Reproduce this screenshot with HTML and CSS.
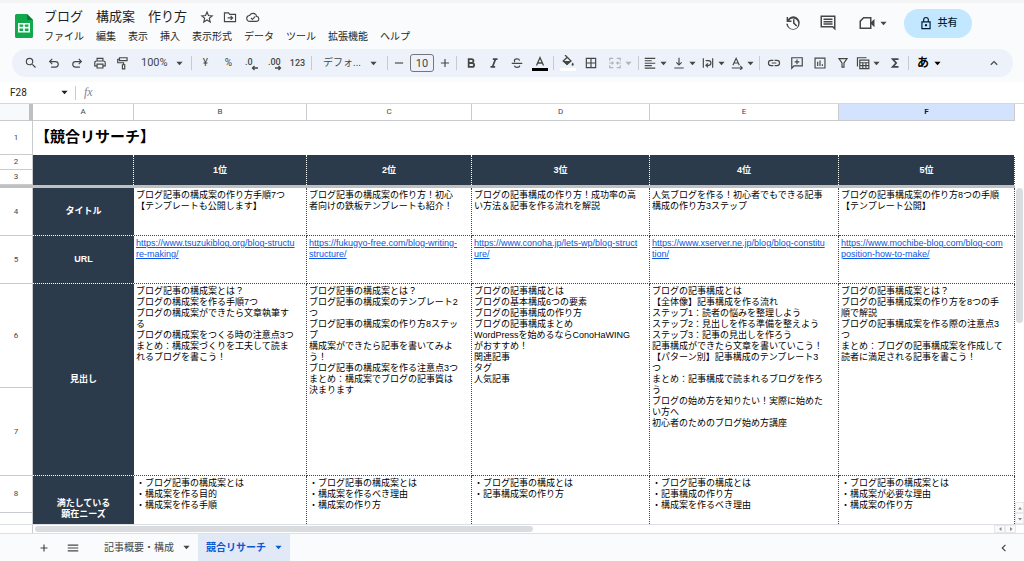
FILE: index.html
```html
<!DOCTYPE html>
<html lang="ja">
<head>
<meta charset="utf-8">
<title>ブログ 構成案 作り方</title>
<link rel="stylesheet" href="styles.css">
</head>
<body>
<svg class="defs" aria-hidden="true">
  <symbol id="caret" viewBox="0 0 8 8"><path d="M.5 2h7L4 6z"/></symbol>
</svg>
<div class="app">
  <header class="top">
    <svg class="logo" viewBox="0 0 18 24" role="img" aria-label="スプレッドシート">
      <path fill="#11a94b" d="M1.500 0H12l6 6v16.500a1.500 1.500 0 0 1-1.500 1.500h-15A1.500 1.500 0 0 1 0 22.500v-21A1.500 1.500 0 0 1 1.500 0z"/>
      <path fill="#0a7a35" d="M12 0l6 6h-6z"/>
      <path fill="#fff" fill-rule="evenodd" d="M3 9h12v9.500H3zM4.500 10.500v2.300h3.700v-2.300zm5.300 0v2.300h3.700v-2.300zM4.500 14.400V17h3.700v-2.600zm5.300 0V17h3.700v-2.600z"/>
    </svg>
    <div class="heading">
      <div class="title-row">
        <h1>ブログ　構成案　作り方</h1>
        <button class="mini" aria-label="スター"><svg class="i14 line" viewBox="0 0 24 24"><path d="M12 3.500l2.500 5.900 6.400.6-4.900 4.200 1.500 6.300-5.500-3.400-5.500 3.400L8 14.200 3.100 10l6.400-.6z"/></svg></button>
        <button class="mini" aria-label="移動"><svg class="i14 line" viewBox="0 0 24 24"><path d="M2.500 5h7l2 2.500h10V20h-19zM8 13.500h8M13 10l3.500 3.500L13 17"/></svg></button>
        <button class="mini" aria-label="保存状態"><svg class="i14 line" viewBox="0 0 24 24"><path d="M6.500 19.500a5 5 0 0 1-.5-10 6.500 6.500 0 0 1 12.300 1.500 4.300 4.300 0 0 1 .2 8.500zM8.500 13.500l2.500 2.500 5-5"/></svg></button>
      </div>
      <nav class="menus">
        <button>ファイル</button><button>編集</button><button>表示</button><button>挿入</button><button>表示形式</button><button>データ</button><button>ツール</button><button>拡張機能</button><button>ヘルプ</button>
      </nav>
    </div>
    <div class="actions">
      <button aria-label="変更履歴"><svg class="i18" viewBox="0 0 24 24"><path d="M13 3a9 9 0 0 0-7.500 4V4h-2v6.500H10v-2H6.800A7 7 0 1 1 5.100 13H3a9 9 0 1 0 10-10zm-1 4v5.600l4.300 4.100 1.400-1.400L14 11.700V7z" /></svg></button>
      <button aria-label="コメント"><svg class="i18" viewBox="0 0 24 24"><path fill-rule="evenodd" d="M2 2h20v20l-4-4H2zm2 2v12h14.800l1.200 1.200V4zm2 2h12v2H6zm0 3.200h12v2H6zm0 3.200h12v2H6z"/></svg></button>
      <button class="meet" aria-label="ビデオ通話"><svg class="i18" viewBox="0 0 24 24"><path class="line" d="M7.500 5H17v14H3V9.500z"/><path d="M17 11l5-4.500v11L17 13z"/></svg><svg class="caret"><use href="#caret"/></svg></button>
      <button class="share"><svg class="i14 line" viewBox="0 0 24 24"><path d="M5 10h14v11.500H5zM8 10V6.500a4 4 0 0 1 8 0V10"/><circle cx="12" cy="15.700" r="1"/></svg>共有</button>
    </div>
  </header>

  <div class="toolbar" role="toolbar">
    <button aria-label="検索"><svg class="i14" viewBox="0 0 24 24"><path d="M15.500 14h-.79l-.28-.27A6.470 6.470 0 0 0 16 9.500 6.500 6.500 0 1 0 9.500 16c1.610 0 3.090-.59 4.230-1.570l.27.28v.79l5 4.990L20.490 19zm-6 0a4.500 4.500 0 1 1 0-9 4.500 4.500 0 0 1 0 9z"/></svg></button>
    <button aria-label="元に戻す"><svg class="i14 line" viewBox="0 0 24 24"><path d="M9 5L4.500 9.500 9 14M5 9.500h9.500a4.700 4.700 0 0 1 0 9.500H7"/></svg></button>
    <button aria-label="やり直し"><svg class="i14 line" viewBox="0 0 24 24"><path d="M15 5l4.500 4.500L15 14M19 9.500H9.500a4.700 4.700 0 0 0 0 9.500H17"/></svg></button>
    <button aria-label="印刷"><svg class="i14 line" viewBox="0 0 24 24"><path d="M7 8V4h10v4M7 17H3v-5.500A3 3 0 0 1 6 8.500h12a3 3 0 0 1 3 3V17h-4M7 14h10v6.500H7z"/></svg></button>
    <button aria-label="書式を貼り付け"><svg class="i14 line" viewBox="0 0 24 24"><path d="M6 3h13v5H6zM6 5.500H3v6h10V15M11 15h4v7h-4z"/></svg></button>
    <label class="pick zoom"><select aria-label="ズーム"><option>100%</option></select><svg class="caret"><use href="#caret"/></svg></label>
    <i class="sep"></i>
    <button aria-label="通貨">¥</button>
    <button aria-label="パーセント">%</button>
    <button aria-label="小数点以下を減らす"><svg class="i16" viewBox="0 0 16 16"><text x="1" y="10">.0</text><path class="thin" d="M14 13H8.500M10.500 11l-2 2 2 2"/></svg></button>
    <button aria-label="小数点以下を増やす"><svg class="i16" viewBox="0 0 16 16"><text x="1" y="10">.00</text><path class="thin" d="M8 13h5.500M11.500 11l2 2-2 2"/></svg></button>
    <button class="num" aria-label="表示形式の詳細">123</button>
    <i class="sep"></i>
    <label class="pick font"><select aria-label="フォント"><option>デフォ...</option></select><svg class="caret"><use href="#caret"/></svg></label>
    <i class="sep"></i>
    <button class="step" aria-label="縮小"><svg class="i14 line" viewBox="0 0 24 24"><path d="M5 12h14"/></svg></button>
    <input class="size" aria-label="フォントサイズ" value="10">
    <button class="step" aria-label="拡大"><svg class="i14 line" viewBox="0 0 24 24"><path d="M5 12h14M12 5v14"/></svg></button>
    <i class="sep"></i>
    <button aria-label="太字"><svg class="i14 heavy" viewBox="0 0 24 24"><path d="M8 5.500h5a3.200 3.200 0 0 1 0 6.400H8zM8 12h6a3.400 3.400 0 0 1 0 6.800H8z"/></svg></button>
    <button aria-label="斜体"><svg class="i14 heavy" viewBox="0 0 24 24"><path d="M10 5.500h8M6 18.500h8M14.500 5.500l-5 13"/></svg></button>
    <button aria-label="取り消し線"><svg class="i14 line" viewBox="0 0 24 24"><path d="M3 12.500h18M16.500 8c-.5-2-2-3-4.500-3-2.700 0-4.500 1.200-4.500 3.200 0 1 .4 1.700 1 2.300M7.500 16.500c.5 2 2 3 4.500 3 2.800 0 4.600-1.300 4.600-3.300"/></svg></button>
    <button aria-label="テキストの色"><svg class="i16" viewBox="0 0 16 16"><path class="thin" d="M4.500 10.500L8 2.500l3.500 8M5.700 8h4.600"/><path fill="#000" d="M0 13h16v3H0z"/></svg></button>
    <i class="sep"></i>
    <button aria-label="塗りつぶしの色"><svg class="i16" viewBox="0 0 16 16"><path class="thin" d="M5 0l6 6-4 3.500L3.200 6 7 2.500"/><path d="M3.200 6h7.800L7 10zM12.700 7.500c1.700 2 1.200 3.200 0 3.200s-1.700-1.200 0-3.200z"/><path fill="#fff" d="M0 13h16v3H0z"/></svg></button>
    <button aria-label="枠線"><svg class="i14 line" viewBox="0 0 24 24"><path d="M4 4h16v16H4zM12 4v16M4 12h16"/></svg></button>
    <button class="drop merge" disabled aria-label="セルを結合"><svg class="i14 line" viewBox="0 0 24 24"><path d="M3 8V4h6M15 4h6v4M3 16v4h6M15 20h6v-4M2 12h7M6.500 9.500L9 12l-2.500 2.500M22 12h-7M17.500 9.500L15 12l2.500 2.500"/></svg><svg class="caret"><use href="#caret"/></svg></button>
    <i class="sep"></i>
    <button class="drop" aria-label="水平方向の配置"><svg class="i14 line" viewBox="0 0 24 24"><path d="M3 4h18M3 8.200h12M3 12.400h18M3 16.600h12M3 20.800h18"/></svg><svg class="caret"><use href="#caret"/></svg></button>
    <button class="drop" aria-label="垂直方向の配置"><svg class="i14 line" viewBox="0 0 24 24"><path d="M12 3v12M7.500 11l4.500 4.500 4.500-4.500M4 20.500h16"/></svg><svg class="caret"><use href="#caret"/></svg></button>
    <button class="drop" aria-label="折り返し"><svg class="i14 line" viewBox="0 0 24 24"><path d="M4 4v16M20 4v16M8 8h5a3.500 3.500 0 0 1 0 8H9M12 12.500L8.500 16l3.500 3.500"/></svg><svg class="caret"><use href="#caret"/></svg></button>
    <button class="drop" aria-label="回転"><svg class="i14 line" viewBox="0 0 24 24"><path d="M5 16l5.500-12L16 16M7 12h7M3 20.500h17M17.500 17l3.500 3.500-3.500 3"/></svg><svg class="caret"><use href="#caret"/></svg></button>
    <i class="sep"></i>
    <button aria-label="リンク"><svg class="i14 line" viewBox="0 0 24 24"><path d="M11 7.500H7a4.500 4.500 0 0 0 0 9h4M13 7.500h4a4.500 4.500 0 0 1 0 9h-4M8 12h8"/></svg></button>
    <button aria-label="コメントを挿入"><svg class="i14 line" viewBox="0 0 24 24"><path d="M3 3h18v14H7l-4 4zM12 6v8M8 10h8"/></svg></button>
    <button aria-label="グラフを挿入"><svg class="i14 line" viewBox="0 0 24 24"><path d="M3.500 3.500h17v17h-17zM8 17v-7M12 17V7.500M16 17v-3"/></svg></button>
    <button aria-label="フィルタ"><svg class="i14 line" viewBox="0 0 24 24"><path d="M5 4.500h14l-5.300 7.500v7h-3.400v-7z"/></svg></button>
    <button class="drop" aria-label="フィルタ表示"><svg class="i14 line" viewBox="0 0 24 24"><path d="M18 3H2.500v15M6.500 7H22v14.500H6.500zM6.500 11.500H22M6.500 16.500H22M11.700 11.500v10M17 11.500v10"/></svg><svg class="caret"><use href="#caret"/></svg></button>
    <button aria-label="関数"><svg class="i14 heavy" viewBox="0 0 24 24"><path d="M18 5.200H8l6 6.800-6 6.800h10"/></svg></button>
    <i class="sep"></i>
    <button class="drop ime" aria-label="入力ツール">あ<svg class="caret"><use href="#caret"/></svg></button>
    <button class="fold" aria-label="メニューを非表示"><svg class="i14 line" viewBox="0 0 24 24"><path d="M6.500 15L12 9.500l5.500 5.500"/></svg></button>
  </div>

  <div class="formula">
    <label class="name"><input aria-label="名前ボックス" value="F28"><svg class="caret"><use href="#caret"/></svg></label>
    <i class="sep"></i>
    <label class="fx" for="fx">fx</label>
    <input id="fx" class="fx-input" aria-label="数式バー">
  </div>

  <main class="sheet">
    <div class="view">
    <table>
      <colgroup><col class="c-num"><col class="c-a"><col class="c-b"><col class="c-c"><col class="c-d"><col class="c-e"><col></colgroup>
      <thead><tr class="letters"><th class="corner"></th><th>A</th><th>B</th><th>C</th><th>D</th><th>E</th><th class="on">F</th></tr></thead>
      <tbody>
        <tr class="r1"><th>1</th><td colspan="6" class="caption">【競合リサーチ】</td></tr>
        <tr class="r2"><th>2</th><td rowspan="2" class="dark"></td><td rowspan="2" class="dark">1位</td><td rowspan="2" class="dark">2位</td><td rowspan="2" class="dark">3位</td><td rowspan="2" class="dark">4位</td><td rowspan="2" class="dark">5位</td></tr>
        <tr class="r2"><th>3</th></tr>
        <tr class="freeze"><td colspan="7"></td></tr>
        <tr class="r4"><th>4</th><td class="dark side">タイトル</td>
          <td>ブログ記事の構成案の作り方手順7つ<br>【テンプレートも公開します】</td>
          <td>ブログ記事の構成案の作り方！初心<br>者向けの鉄板テンプレートも紹介！</td>
          <td>ブログの記事構成の作り方！成功率の高<br>い方法＆記事を作る流れを解説</td>
          <td>人気ブログを作る！初心者でもできる記事<br>構成の作り方3ステップ</td>
          <td>ブログの記事構成案の作り方8つの手順<br>【テンプレート公開】</td></tr>
        <tr class="r4"><th>5</th><td class="dark side">URL</td>
          <td><a href="https://www.tsuzukiblog.org/blog-structure-making/">https://www.tsuzukiblog.org/blog-structu<br>re-making/</a></td>
          <td><a href="https://fukugyo-free.com/blog-writing-structure/">https://fukugyo-free.com/blog-writing-<br>structure/</a></td>
          <td><a href="https://www.conoha.jp/lets-wp/blog-structure/">https://www.conoha.jp/lets-wp/blog-struct<br>ure/</a></td>
          <td><a href="https://www.xserver.ne.jp/blog/blog-constitution/">https://www.xserver.ne.jp/blog/blog-constitu<br>tion/</a></td>
          <td><a href="https://www.mochibe-blog.com/blog-composition-how-to-make/">https://www.mochibe-blog.com/blog-com<br>position-how-to-make/</a></td></tr>
        <tr class="r6"><th>6</th><td rowspan="2" class="dark side">見出し</td>
          <td rowspan="2">ブログ記事の構成案とは？<br>ブログの構成案を作る手順7つ<br>ブログの構成案ができたら文章執筆す<br>る<br>ブログの構成案をつくる時の注意点3つ<br>まとめ：構成案づくりを工夫して読ま<br>れるブログを書こう！</td>
          <td rowspan="2">ブログ記事の構成案とは？<br>ブログ記事の構成案のテンプレート2<br>つ<br>ブログ記事の構成案の作り方8ステッ<br>プ<br>構成案ができたら記事を書いてみよ<br>う！<br>ブログ記事の構成案を作る注意点3つ<br>まとめ：構成案でブログの記事質は<br>決まります</td>
          <td rowspan="2">ブログの記事構成とは<br>ブログの基本構成6つの要素<br>ブログの記事構成の作り方<br>ブログの記事構成まとめ<br>WordPressを始めるならConoHaWING<br>がおすすめ！<br>関連記事<br>タグ<br>人気記事</td>
          <td rowspan="2">ブログの記事構成とは<br>【全体像】記事構成を作る流れ<br>ステップ1：読者の悩みを整理しよう<br>ステップ2：見出しを作る準備を整えよう<br>ステップ3：記事の見出しを作ろう<br>記事構成ができたら文章を書いていこう！<br>【パターン別】記事構成のテンプレート3<br>つ<br>まとめ：記事構成で読まれるブログを作ろ<br>う<br>ブログの始め方を知りたい！実際に始めた<br>い方へ<br>初心者のためのブログ始め方講座</td>
          <td rowspan="2">ブログの記事構成案とは？<br>ブログの記事構成案の作り方を8つの手<br>順で解説<br>ブログの記事構成案を作る際の注意点3<br>つ<br>まとめ：ブログの記事構成案を作成して<br>読者に満足される記事を書こう！</td></tr>
        <tr class="r7"><th>7</th></tr>
        <tr class="r8"><th>8</th><td rowspan="2" class="dark side">満たしている<br>顕在ニーズ</td>
          <td rowspan="2">・ブログ記事の構成案とは<br>・構成案を作る目的<br>・構成案を作る手順</td>
          <td rowspan="2">・ブログ記事の構成案とは<br>・構成案を作るべき理由<br>・構成案の作り方</td>
          <td rowspan="2">・ブログ記事の構成とは<br>・記事構成案の作り方</td>
          <td rowspan="2">・ブログ記事の構成とは<br>・記事構成の作り方<br>・構成案を作るべき理由</td>
          <td rowspan="2">・ブログ記事の構成案とは<br>・構成案が必要な理由<br>・構成案の作り方</td></tr>
        <tr class="r9"><th></th></tr>
      </tbody>
    </table>
    </div>
    <div class="vbar">
      <div class="vtrack"><div class="vthumb"></div></div>
      <button aria-label="上へ"><svg viewBox="0 0 8 8"><path d="M2 5.500h4L4 3z"/></svg></button>
      <button aria-label="下へ"><svg viewBox="0 0 8 8"><path d="M2 3h4L4 5.500z"/></svg></button>
    </div>
  </main>

  <div class="hbar">
    <div class="htrack"><div class="hthumb"></div></div>
    <button aria-label="左へ"><svg viewBox="0 0 8 8"><path d="M5.500 2v4L3 4z"/></svg></button>
    <button aria-label="右へ"><svg viewBox="0 0 8 8"><path d="M3 2v4l2.500-2z"/></svg></button>
  </div>

  <footer class="tabs">
    <button class="tool" aria-label="シートを追加"><svg class="i14 line" viewBox="0 0 24 24"><path d="M6 12h12M12 6v12"/></svg></button>
    <button class="tool" aria-label="すべてのシート"><svg class="i14 line" viewBox="0 0 24 24"><path d="M3 7h18M3 12h18M3 17h18"/></svg></button>
    <button class="tab">記事概要・構成<svg class="caret"><use href="#caret"/></svg></button>
    <button class="tab current">競合リサーチ<svg class="caret"><use href="#caret"/></svg></button>
    <button class="tool panel" aria-label="サイドパネルを表示"><svg class="i14 line" viewBox="0 0 24 24"><path d="M14.500 6.500L9 12l5.500 5.500"/></svg></button>
  </footer>
</div>
</body>
</html>
```
FILE: styles.css
```css
* { box-sizing: border-box; }

body {
  margin: 0;
  color: #1f1f1f;
  background: #f9fbfd;
  font-family: Roboto, "Noto Sans CJK JP", sans-serif;
  font-size: 10px;
  line-height: 12px;
}

button, input, select {
  margin: 0;
  padding: 0;
  border: 0;
  background: none;
  color: inherit;
  font: inherit;
}

button {
  display: flex;
  align-items: center;
  justify-content: center;
  white-space: nowrap;
}

svg { display: block; flex: none; fill: currentColor; }
.defs { position: absolute; width: 0; height: 0; }
.i14 { width: 14px; height: 14px; }
.i16 { width: 16px; height: 16px; }
.i18 { width: 18px; height: 18px; }
.caret { width: 7px; height: 7px; }
.line { fill: none; stroke: currentColor; stroke-width: 2; }
.heavy { fill: none; stroke: currentColor; stroke-width: 3; }
.thin { fill: none; stroke: currentColor; stroke-width: 1.3; }

.app {
  display: flex;
  flex-direction: column;
  height: 100vh;
  border-top: 3px solid #f4f4f4;
}

/* Header */
.top {
  display: flex;
  padding: 4px 12px 0 15px;
  height: 46px;
}
.logo { width: 18px; height: 24px; margin-top: 7px; }
.heading { padding-left: 11px; }
.title-row { display: flex; align-items: center; height: 20px; color: #444746; }
h1 {
  margin: 0 8px 0 0;
  color: #1f1f1f;
  font-size: 13px;
  font-weight: 400;
  line-height: 20px;
}
.mini { width: 23px; height: 18px; }
.menus { display: flex; gap: 12px; }
.menus button { height: 20px; }

.actions {
  display: flex;
  align-items: center;
  gap: 17px;
  height: 32px;
  margin-left: auto;
  padding-right: 40px;
  color: #444746;
}
.meet { gap: 4px; padding-left: 4px; }
.share {
  gap: 5px;
  width: 68px;
  height: 29px;
  border-radius: 15px;
  background: #c2e7ff;
  color: #001d35;
  font-weight: 500;
}

/* Toolbar */
.toolbar {
  display: flex;
  align-items: center;
  height: 28px;
  margin: 0 11px 5px 12px;
  padding: 0 8px 0 7px;
  border-radius: 14px;
  background: #edf2fa;
  color: #444746;
}
.toolbar button { flex: none; width: 23px; height: 22px; }
.toolbar text { font-size: 9px; font-weight: 500; }
.toolbar .num { font-size: 9px; font-weight: 500; }
.sep { flex: none; width: 1px; height: 14px; margin: 0 2px; background: #c7cad0; }
.pick { display: grid; align-items: center; }
.pick > * { grid-area: 1 / 1; }
.pick .caret { justify-self: end; pointer-events: none; }
.pick select { appearance: none; width: 100%; }
.zoom { width: 55px; padding: 0 6px 0 7px; font-size: 11px; }
.font { width: 71px; padding: 0 8px 0 9px; }
.toolbar .step { width: 18px; }
.size {
  width: 24px;
  height: 18px;
  margin: 0 2px;
  border: 1px solid #747775;
  border-radius: 3px;
  font-size: 11px;
  text-align: center;
}
.toolbar .drop { justify-content: flex-start; gap: 3px; width: 29px; padding-left: 2px; }
.toolbar .merge { width: 34px; padding-left: 6px; color: #b0b3b8; }
.toolbar .ime { width: 35px; padding-left: 6px; gap: 5px; color: #000; font-size: 12px; font-weight: 700; }
.toolbar .fold { margin-left: auto; }

/* Formula bar */
.formula {
  display: flex;
  align-items: center;
  height: 22px;
  border-bottom: 1px solid #d5d7da;
  background: #fff;
}
.name { display: flex; align-items: center; width: 73px; padding: 0 5px 0 10px; }
.name input { flex: 1; min-width: 0; }
.fx { padding: 0 8px 0 6px; color: #80868b; font: italic 12px "Liberation Serif", serif; }
.fx-input { flex: 1; }

/* Grid */
.sheet { display: flex; flex: 1; min-height: 0; background: #fff; }
.view { flex: 1; overflow: hidden; }
table { width: 100%; table-layout: fixed; border-collapse: separate; border-spacing: 0; }
.c-num { width: 33px; }
.c-a { width: 9.95%; }
.c-b { width: 17.05%; }
.c-c { width: 16.26%; }
.c-d { width: 17.54%; }
.c-e { width: 18.62%; }

th {
  padding: 0;
  border: solid #c9cbce;
  border-width: 0 1px 1px 0;
  background: #fff;
  color: #444746;
  font-size: 8px;
  font-weight: 400;
  line-height: 10px;
}
td {
  padding: 2px 0 0 2px;
  border: dotted #444;
  border-width: 0 1px 1px 0;
  color: #000;
  font-family: "Liberation Sans", "Noto Sans CJK JP", sans-serif;
  font-size: 9px;
  line-height: 11px;
  vertical-align: top;
  white-space: nowrap;
}
td a { color: #0b57e0; }
.letters { height: 17px; }
.corner { border-right: 4px solid #c0c0c0; background: #f8f9fa; }
.on { background: #d3e3fd; color: #041e49; font-weight: 700; }
.r1 { height: 34px; }
.r2 { height: 15px; }
.r4 { height: 48px; }
.r6 { height: 104px; }
.r7 { height: 88px; }
.r8 { height: 37px; }
.r9 { height: 29px; }
.caption {
  padding: 0 0 2px 2px;
  border: 0;
  font-size: 15px;
  font-weight: 700;
  line-height: 18px;
  vertical-align: middle;
}
.dark {
  padding: 0;
  border-color: #fff;
  border-bottom: 0;
  background: #2b3b4b;
  color: #fff;
  font-weight: 700;
  text-align: center;
  vertical-align: middle;
}
.side { border-right: 0; border-bottom: 1px dotted #fff; }
.freeze { height: 3px; }
.freeze td { padding: 0; border: 0; background: #c0c0c0; line-height: 0; }

/* Scroll bars */
.vbar { display: flex; flex-direction: column; width: 9px; padding-top: 84px; }
.vtrack { flex: 1; padding: 0 1px; }
.vthumb { height: 43%; border-radius: 4px; background: #dadce0; }
.vbar button, .hbar button { border: 1px solid #e6e8eb; background: #fafafa; color: #888; }
.vbar button { height: 11px; }
.vbar svg, .hbar svg { width: 8px; height: 8px; }

.hbar {
  display: flex;
  height: 10px;
  padding: 0 8px 0 32px;
  border: solid #dcdfe3;
  border-width: 1px 0;
  background: #fff;
}
.htrack { flex: 1; padding: 1px 2px; border-left: 1px solid #c9cbce; }
.hthumb { width: 52%; height: 6px; border-radius: 3px; background: #dadce0; }
.hbar button { width: 11px; height: 8px; }

/* Sheet tabs */
.tabs { display: flex; height: 27px; padding: 0 9px 0 29px; color: #444746; }
.tool { width: 29px; }
.tab { gap: 9px; padding: 0 8px; margin-left: 9px; }
.current { margin-left: 0; background: #e1e9f7; color: #0b57d0; font-weight: 700; }
.panel { width: 23px; margin-left: auto; }
```
